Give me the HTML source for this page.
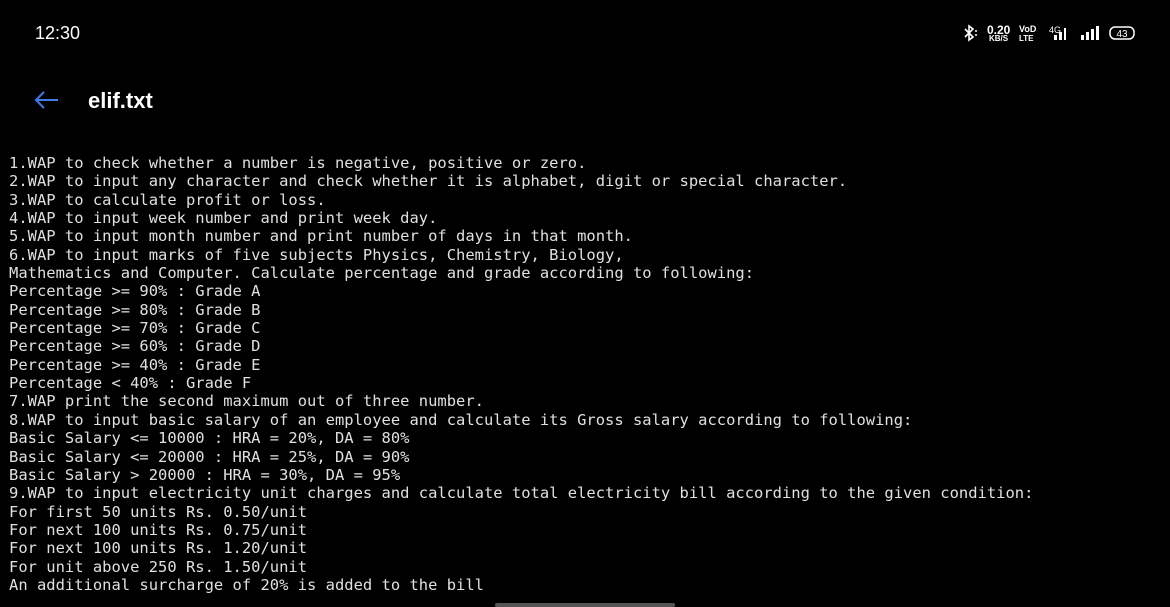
<!DOCTYPE html>
<html><head><meta charset="utf-8"><style>
html,body{margin:0;padding:0;background:#000;width:1170px;height:607px;overflow:hidden;position:relative}
.time{position:absolute;left:35px;top:23px;color:#fff;font:18px "Liberation Sans",sans-serif}
.title{position:absolute;left:88px;top:88px;color:#fff;font:bold 22px "Liberation Sans",sans-serif}
pre{position:absolute;left:9px;top:154px;margin:0;color:#e0e0e0;font:15.47px/18.35px "DejaVu Sans Mono",monospace}
.sb{position:absolute;color:#fff;font:bold 10px "Liberation Sans",sans-serif}
.bar{position:absolute;left:495px;top:603px;width:180px;height:4px;background:#555;border-radius:2px}
</style></head><body>
<div class="time">12:30</div>
<svg style="position:absolute;left:962px;top:24px" width="18" height="18" viewBox="0 0 18 18"><path d="M3 5l8 8-4 3V2l4 3-8 8" stroke="#fff" stroke-width="1.6" fill="none"/><circle cx="14" cy="7" r="1" fill="#fff"/><circle cx="14" cy="11" r="1" fill="#fff"/></svg>
<div class="sb" style="left:987px;top:23px;font-size:12px">0.20</div>
<div class="sb" style="left:989px;top:34px;font-size:8px">KB/S</div>
<div class="sb" style="left:1019px;top:24px;font-size:9px">VoD</div>
<div class="sb" style="left:1019px;top:34px;font-size:8px">LTE</div>
<div class="sb" style="left:1049px;top:25px;font-size:9px;font-weight:normal">4G</div>
<svg style="position:absolute;left:1052px;top:24px" width="90" height="20"><rect x="2" y="11" width="3" height="5" fill="#fff"/><rect x="7" y="8" width="3" height="8" fill="#fff"/><rect x="12" y="4" width="2" height="12" fill="#fff"/><rect x="29" y="11" width="3" height="5" fill="#fff"/><rect x="34" y="8" width="3" height="8" fill="#fff"/><rect x="39" y="5" width="3" height="11" fill="#fff"/><rect x="44" y="2" width="3" height="14" fill="#fff"/><rect x="58" y="3" width="24" height="12" rx="5" fill="none" stroke="#fff" stroke-width="1.5"/><text x="70" y="13" fill="#fff" font-size="10" text-anchor="middle" font-family="Liberation Sans">43</text></svg>
<svg style="position:absolute;left:33px;top:90px" width="28" height="20"><path d="M25 10H3M11 2L3 10l8 8" stroke="#3d7be8" stroke-width="2" fill="none"/></svg>
<div class="title">elif.txt</div>
<pre>1.WAP to check whether a number is negative, positive or zero.
2.WAP to input any character and check whether it is alphabet, digit or special character.
3.WAP to calculate profit or loss.
4.WAP to input week number and print week day.
5.WAP to input month number and print number of days in that month.
6.WAP to input marks of five subjects Physics, Chemistry, Biology,
Mathematics and Computer. Calculate percentage and grade according to following:
Percentage &gt;= 90% : Grade A
Percentage &gt;= 80% : Grade B
Percentage &gt;= 70% : Grade C
Percentage &gt;= 60% : Grade D
Percentage &gt;= 40% : Grade E
Percentage &lt; 40% : Grade F
7.WAP print the second maximum out of three number.
8.WAP to input basic salary of an employee and calculate its Gross salary according to following:
Basic Salary &lt;= 10000 : HRA = 20%, DA = 80%
Basic Salary &lt;= 20000 : HRA = 25%, DA = 90%
Basic Salary &gt; 20000 : HRA = 30%, DA = 95%
9.WAP to input electricity unit charges and calculate total electricity bill according to the given condition:
For first 50 units Rs. 0.50/unit
For next 100 units Rs. 0.75/unit
For next 100 units Rs. 1.20/unit
For unit above 250 Rs. 1.50/unit
An additional surcharge of 20% is added to the bill</pre>
<div class="bar"></div>
</body></html>
